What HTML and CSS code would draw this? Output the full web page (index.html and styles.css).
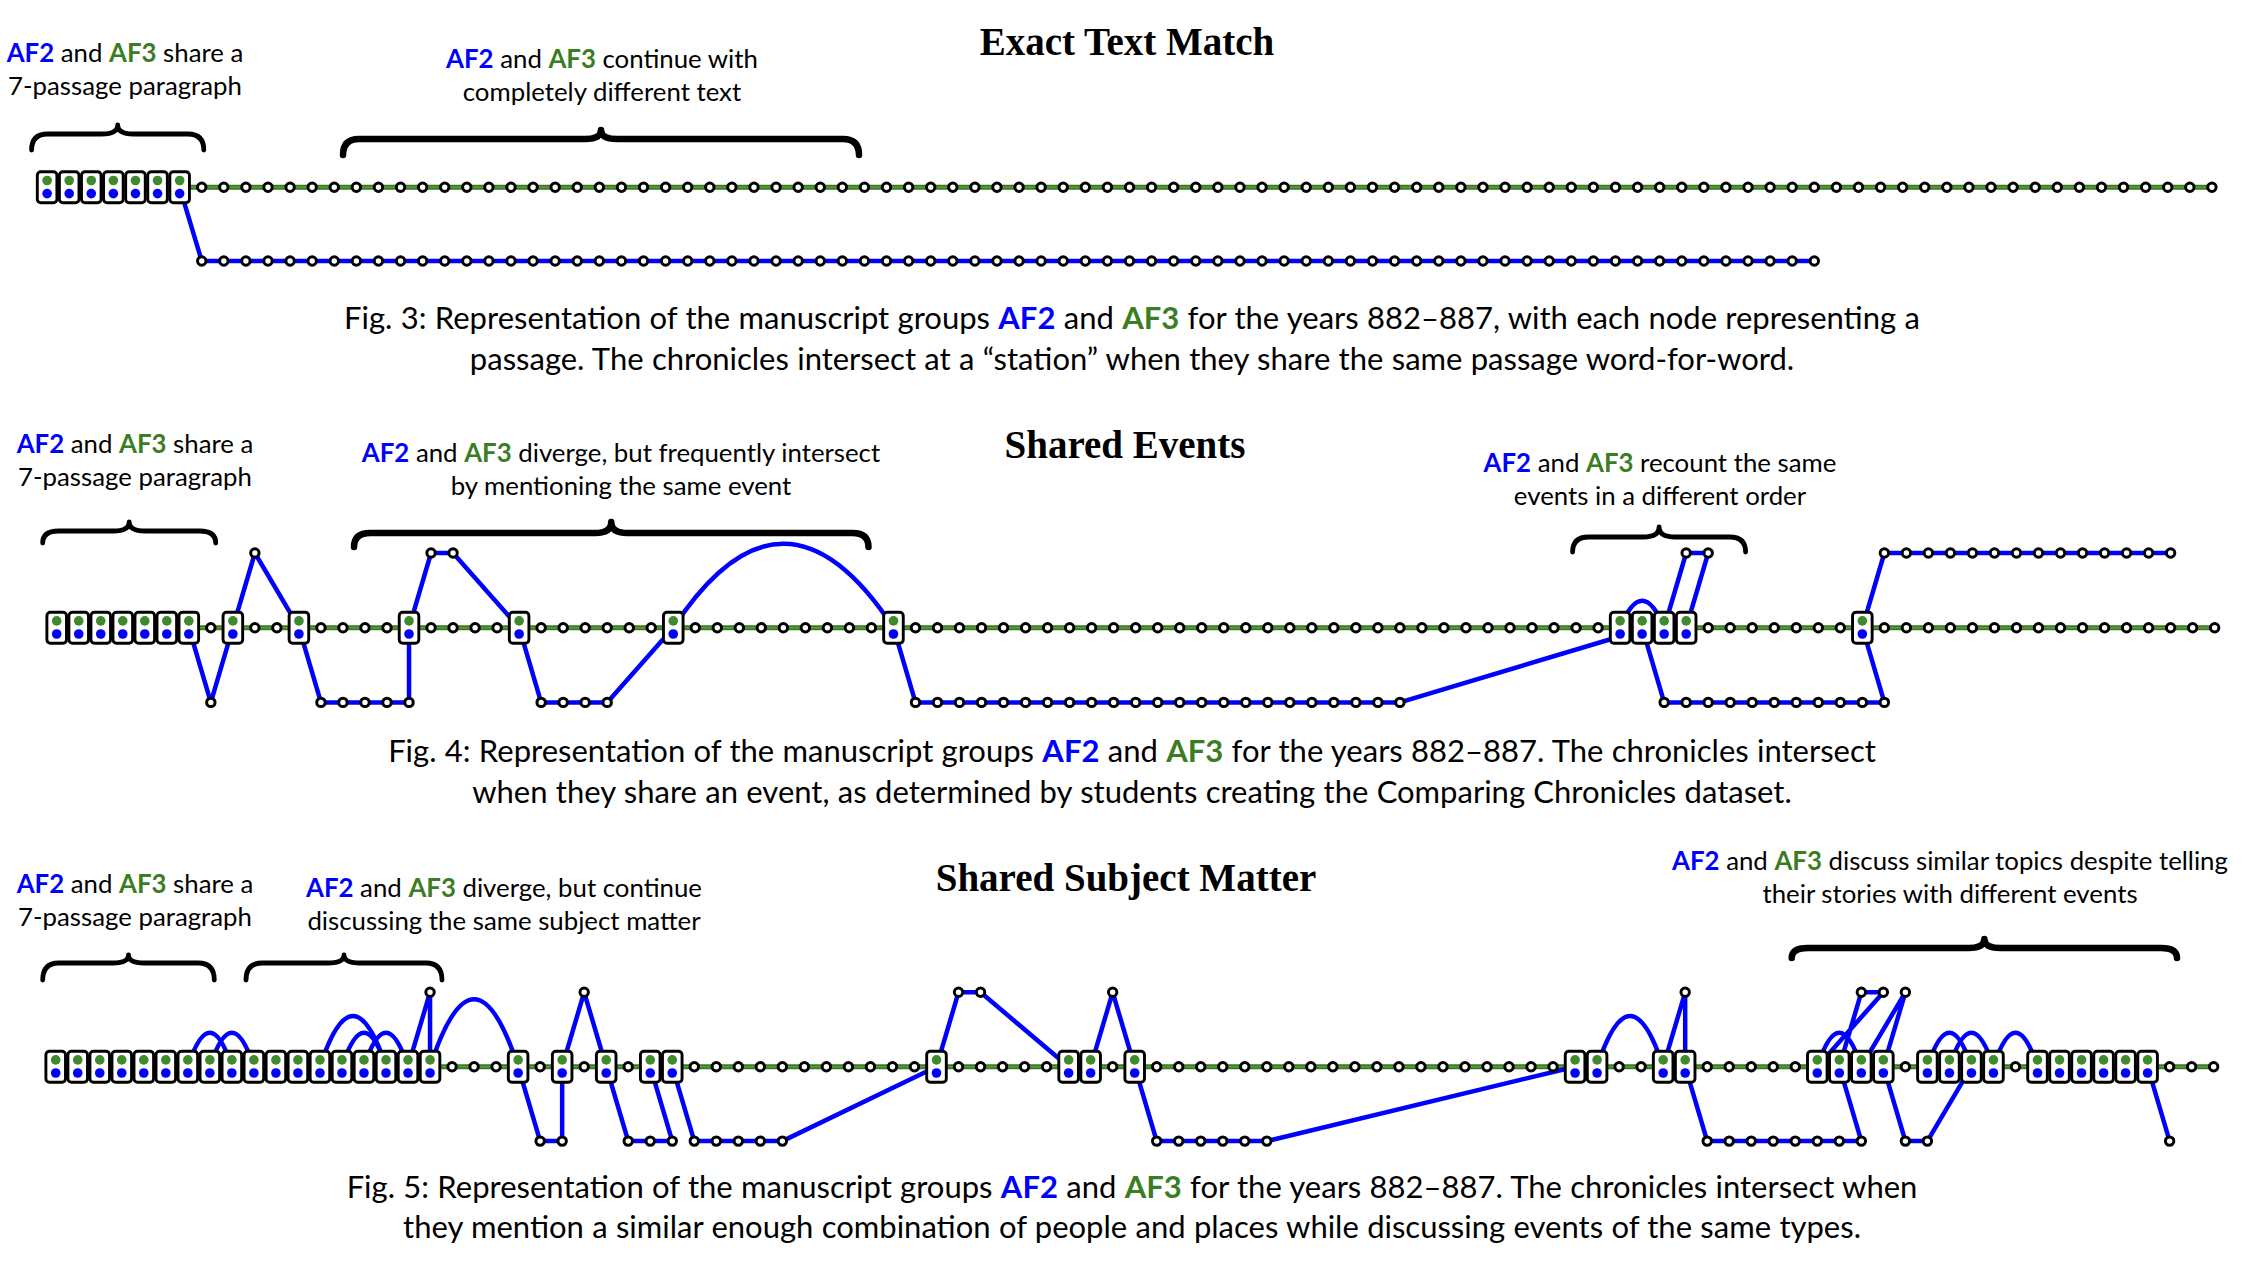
FILE: index.html
```html
<!DOCTYPE html>
<html lang="en">
<head>
<meta charset="utf-8">
<title>Comparing Chronicles – AF2 and AF3</title>
<link rel="stylesheet" href="styles.css">
</head>
<body>
<main class="page">

  <figure class="fig">
    <div class="diagram d3">
      <svg class="graph" data-fig="fig3" viewBox="0 0 2256 297" preserveAspectRatio="none"></svg>
      <h2 class="title t3">Exact Text Match</h2>
      <p class="label l3a"><b class="af2">AF2</b> and <b class="af3">AF3</b> share a<br>7-passage paragraph</p>
      <p class="label l3b"><b class="af2">AF2</b> and <b class="af3">AF3</b> continue with<br>completely different text</p>
    </div>
    <figcaption class="caption">Fig. 3: Representation of the manuscript groups <b class="af2">AF2</b> and <b class="af3">AF3</b> for the years 882–887, with each node representing a<br>passage. The chronicles intersect at a “station” when they share the same passage word-for-word.</figcaption>
  </figure>

  <figure class="fig">
    <div class="diagram d4">
      <svg class="graph" data-fig="fig4" viewBox="0 378 2256 352" preserveAspectRatio="none"></svg>
      <h2 class="title t4">Shared Events</h2>
      <p class="label l4a"><b class="af2">AF2</b> and <b class="af3">AF3</b> share a<br>7-passage paragraph</p>
      <p class="label l4b"><b class="af2">AF2</b> and <b class="af3">AF3</b> diverge, but frequently intersect<br>by mentioning the same event</p>
      <p class="label l4c"><b class="af2">AF2</b> and <b class="af3">AF3</b> recount the same<br>events in a different order</p>
    </div>
    <figcaption class="caption">Fig. 4: Representation of the manuscript groups <b class="af2">AF2</b> and <b class="af3">AF3</b> for the years 882–887. The chronicles intersect<br>when they share an event, as determined by students creating the Comparing Chronicles dataset.</figcaption>
  </figure>

  <figure class="fig">
    <div class="diagram d5">
      <svg class="graph" data-fig="fig5" viewBox="0 811 2256 354.5" preserveAspectRatio="none"></svg>
      <h2 class="title t5">Shared Subject Matter</h2>
      <p class="label l5a"><b class="af2">AF2</b> and <b class="af3">AF3</b> share a<br>7-passage paragraph</p>
      <p class="label l5b"><b class="af2">AF2</b> and <b class="af3">AF3</b> diverge, but continue<br>discussing the same subject matter</p>
      <p class="label l5c"><b class="af2">AF2</b> and <b class="af3">AF3</b> discuss similar topics despite telling<br>their stories with different events</p>
    </div>
    <figcaption class="caption">Fig. 5: Representation of the manuscript groups <b class="af2">AF2</b> and <b class="af3">AF3</b> for the years 882–887. The chronicles intersect when<br>they mention a similar enough combination of people and places while discussing events of the same types.</figcaption>
  </figure>

</main>
<script src="script.js"></script>
</body>
</html>
```

FILE: styles.css
```css
html, body {
  margin: 0;
  padding: 0;
  background: #ffffff;
}

body {
  width: 2256px;
  height: 1276px;
  overflow: hidden;
  color: #000000;
  font-family: Lato, "Open Sans", sans-serif;
}

.page {
  display: flex;
  flex-direction: column;
}

.fig {
  margin: 0;
  display: flex;
  flex-direction: column;
}

.diagram {
  position: relative;
}

.d3 { height: 297px; }
.d4 { height: 352px; }
.d5 { height: 354.5px; }

.graph {
  display: block;
  width: 2256px;
  height: 100%;
}

/* ---------- texts ---------- */

.caption {
  height: 81px;
  padding-left: 8px;
  font-size: 31px;
  line-height: 40.5px;
  word-spacing: 0.4px;
  text-align: center;
  white-space: nowrap;
}

.af2 {
  color: #0000ff;
  font-weight: 700;
}

.af3 {
  color: #3b7d23;
  font-weight: 700;
}

.title {
  position: absolute;
  margin: 0;
  font-family: "Liberation Serif", "Times New Roman", serif;
  font-weight: 700;
  font-size: 39px;
  line-height: 39px;
  white-space: nowrap;
  transform: translateX(-50%);
}

.label {
  position: absolute;
  margin: 0;
  font-size: 25.8px;
  line-height: 33.3px;
  text-align: center;
  white-space: nowrap;
  transform: translateX(-50%);
}

.t3  { left: 1127px; top: 22.3px; }
.l3a { left: 125px;  top: 36px; }
.l3b { left: 602px;  top: 42px; }

.t4  { left: 1125px; top: 46.9px; }
.l4a { left: 135px;  top: 49px; }
.l4b { left: 621px; top: 57.5px; }
.l4c { left: 1660px; top: 67.5px; }

.t5  { left: 1126px; top: 46.9px; }
.l5a { left: 135px;  top: 55.5px; }
.l5b { left: 504px; top: 59.5px; }
.l5c { left: 1950px; top: 33px; }

/* ---------- diagram parts ---------- */

.braces path {
  fill: none;
  stroke: #000000;
  stroke-linecap: round;
  stroke-linejoin: round;
}

.af3-line {
  stroke: #3a7a22;
  stroke-width: 5;
}

.af3-core {
  stroke: #5b9a40;
  stroke-width: 1.4;
}

.af2-lines polyline,
.af2-lines path {
  fill: none;
  stroke: #0000ff;
  stroke-width: 4.5;
  stroke-linejoin: round;
  stroke-linecap: round;
}

.nodes circle {
  fill: #ffffff;
  stroke: #000000;
  stroke-width: 3;
}

.box {
  fill: #ffffff;
  stroke: #000000;
  stroke-width: 2.9;
}

.dot-af3 { fill: #3f8a2d; }
.dot-af2 { fill: #0000ff; }
```

FILE: script.js
```js
(function () {
  var NS = 'http://www.w3.org/2000/svg';

  function el(parent, tag, attrs) {
    var e = document.createElementNS(NS, tag);
    for (var k in attrs) e.setAttribute(k, attrs[k]);
    parent.appendChild(e);
    return e;
  }

  function list(spec) {
    var out = [];
    if (!spec) return out;
    spec.split(',').forEach(function (p) {
      var ab = p.split('-');
      if (ab.length > 1) {
        for (var i = +ab[0]; i <= +ab[1]; i++) out.push(i);
      } else {
        out.push(+ab[0]);
      }
    });
    return out;
  }

  /* braces: [x1, x2, yCusp, yBody, yEnd, strokeWidth] */
  var FIGS = {
    fig3: {
      x0: 47.1, dx: 22.09, yc: 187.3, off: 73.7, last: 98,
      stations: '0-6',
      tops: '',
      bottoms: '7-80',
      paths: ['S6 B7 B80'],
      arcs: [],
      braces: [[31.6, 203.8, 125, 134, 150, 4.8], [343, 859, 130, 139, 155, 6.5]]
    },
    fig4: {
      x0: 56.7, dx: 22.02, yc: 627.7, off: 74.7, last: 98,
      stations: '0-6,8,11,16,21,28,38,71-74,82',
      tops: '9,17,18,74,75,83-96',
      bottoms: '7,12-16,22-25,39-61,73-83',
      paths: [
        'S6 B7 S8 T9 S11 B12 B16 S16 T17 T18 S21 B22 B25 S28',
        'S38 B39 B61 @1618,637',
        'S73 T74 T75 S74',
        'S72 B73 B83 S82 T83 T96'
      ],
      arcs: [[28, 38, 84], [71, 73, 27]],
      braces: [[42.7, 215.7, 522, 531, 543, 4.8], [354, 868.5, 522, 533, 547, 6.5], [1572.6, 1745.6, 527, 537, 552, 4.8]]
    },
    fig5: {
      x0: 55.7, dx: 22.02, yc: 1066.7, off: 74.4, last: 98,
      stations: '0-17,21,23,25,27,28,40,46,47,49,69,70,73,74,80-83,85-88,90-95',
      tops: '17,24,41,42,48,74,82,83,84',
      bottoms: '22,23,26-33,50-55,75-82,84,85,96',
      paths: [
        'S16 T17 S17',
        'S21 B22 B23 S23 T24 S25 B26 B28 S27',
        'S28 B29 B33 S40 T41 T42 S46',
        'S47 T48 S49 B50 B55 S69',
        'S73 T74 S74 B75 B82 S81 T82 T83 S80',
        'S82 T84 S83 B84 B85 S87',
        'S95 B96'
      ],
      arcs: [[6, 8, 34], [7, 9, 34], [12, 15, 50.7], [13, 15, 34], [14, 16, 34], [17, 21, 67.4],
             [70, 73, 50.7], [80, 82, 34], [85, 87, 34], [86, 88, 34], [88, 90, 34]],
      braces: [[42.7, 214.3, 955, 963, 980, 4.8], [246, 442, 955, 963, 980, 4.8], [1791.7, 2177, 939, 948, 958, 6.5]]
    }
  };

  function draw(svg, d) {
    var X = function (i) { return d.x0 + d.dx * i; };
    var ym = d.yc, yt = d.yc - d.off, yb = d.yc + d.off;

    function pt(tok) {
      if (tok.charAt(0) === '@') return tok.slice(1);
      var i = +tok.slice(1);
      var c = tok.charAt(0);
      var y = c === 'S' ? ym : (c === 'T' ? yt : yb);
      return X(i).toFixed(2) + ',' + y.toFixed(2);
    }

    var braces = el(svg, 'g', { 'class': 'braces' });
    d.braces.forEach(function (b) {
      var x1 = b[0], x2 = b[1], yC = b[2], yB = b[3], yE = b[4];
      var m = (x1 + x2) / 2;
      var r = Math.min(16, (x2 - x1) / 9);
      var p = 'M' + x1 + ' ' + yE +
        ' Q' + x1 + ' ' + yB + ' ' + (x1 + r) + ' ' + yB +
        ' L' + (m - r) + ' ' + yB +
        ' Q' + m + ' ' + yB + ' ' + m + ' ' + yC +
        ' Q' + m + ' ' + yB + ' ' + (m + r) + ' ' + yB +
        ' L' + (x2 - r) + ' ' + yB +
        ' Q' + x2 + ' ' + yB + ' ' + x2 + ' ' + yE;
      el(braces, 'path', { d: p, 'stroke-width': b[5] });
    });

    el(svg, 'line', { 'class': 'af3-line', x1: X(0), y1: ym, x2: X(d.last), y2: ym });
    el(svg, 'line', { 'class': 'af3-core', x1: X(0), y1: ym, x2: X(d.last), y2: ym });

    var blue = el(svg, 'g', { 'class': 'af2-lines' });
    d.paths.forEach(function (p) {
      el(blue, 'polyline', { points: p.split(' ').map(pt).join(' ') });
    });
    d.arcs.forEach(function (a) {
      var xa = X(a[0]), xb = X(a[1]), xm = (xa + xb) / 2;
      el(blue, 'path', { d: 'M' + xa + ' ' + ym + ' Q' + xm + ' ' + (ym - 2 * a[2]) + ' ' + xb + ' ' + ym });
    });

    var stations = list(d.stations);
    var isStation = {};
    stations.forEach(function (i) { isStation[i] = true; });

    var R = 4.2;
    var nodes = el(svg, 'g', { 'class': 'nodes' });
    for (var i = 0; i <= d.last; i++) {
      if (!isStation[i]) el(nodes, 'circle', { cx: X(i), cy: ym, r: R });
    }
    list(d.tops).forEach(function (i) { el(nodes, 'circle', { cx: X(i), cy: yt, r: R }); });
    list(d.bottoms).forEach(function (i) { el(nodes, 'circle', { cx: X(i), cy: yb, r: R }); });

    var sg = el(svg, 'g', { 'class': 'stations' });
    stations.forEach(function (i) {
      var x = X(i);
      el(sg, 'rect', { 'class': 'box', x: x - 9.8, y: ym - 15.5, width: 19.6, height: 31, rx: 3.5 });
      el(sg, 'circle', { 'class': 'dot-af3', cx: x, cy: ym - 6.8, r: 4.8 });
      el(sg, 'circle', { 'class': 'dot-af2', cx: x, cy: ym + 6.3, r: 4.8 });
    });
  }

  var svgs = document.querySelectorAll('svg[data-fig]');
  for (var s = 0; s < svgs.length; s++) {
    draw(svgs[s], FIGS[svgs[s].getAttribute('data-fig')]);
  }
})();
```
